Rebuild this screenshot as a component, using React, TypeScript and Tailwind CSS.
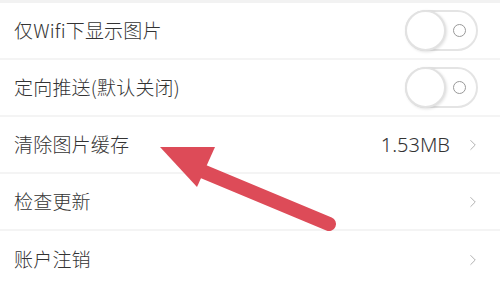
import { ChevronRight } from "lucide-react";

const font = { fontFamily: '"Noto Sans CJK SC", "Noto Sans", sans-serif' };

function Toggle() {
  return (
    <div className="relative w-[73px] h-[41px] rounded-full border-2 border-[#e4e4e4] bg-white">
      <div className="absolute left-[-2px] top-[-2px] w-[41px] h-[41px] rounded-full border-2 border-[#e2e2e2] bg-white shadow-[1px_1px_3px_rgba(0,0,0,0.12)]" />
      <div className="absolute right-[10px] top-[12px] w-[13px] h-[13px] rounded-full border-[1.5px] border-[#999]" />
    </div>
  );
}

function Row({ label, right, last }: { label: string; right: React.ReactNode; last?: boolean }) {
  return (
    <div className={`h-[57px] flex items-center justify-between pl-[14px] pr-[18px] bg-white ${last ? "" : "border-b-2 border-[#f4f4f4]"}`}>
      <span className="text-[19px] font-light text-[#333] tracking-[0.2px]">{label}</span>
      {right}
    </div>
  );
}

function Chevron() {
  return <ChevronRight className="w-[18px] h-[18px] text-[#b0b0b0]" strokeWidth={1.3} />;
}

export default function App() {
  return (
    <div className="relative w-[500px] h-[284px] overflow-hidden bg-white" style={font}>
      <div className="h-[3px] bg-[#f2f2f2]" />
      <Row label="仅Wifi下显示图片" right={<div className="mr-[4px]"><Toggle /></div>} />
      <Row label="定向推送(默认关闭)" right={<div className="mr-[4px]"><Toggle /></div>} />
      <Row
        label="清除图片缓存"
        right={
          <div className="flex items-center gap-[14px]">
            <span className="text-[20px] font-light text-[#333]" style={{ fontFamily: '"Noto Sans", sans-serif' }}>1.53MB</span>
            <Chevron />
          </div>
        }
      />
      <Row label="检查更新" right={<Chevron />} />
      <Row label="账户注销" right={<Chevron />} last />

      {/* red arrow annotation */}
      <svg className="absolute left-0 top-0" width="500" height="284" viewBox="0 0 500 284">
        <line x1="190" y1="166" x2="329" y2="224" stroke="#dd4b58" strokeWidth="14" strokeLinecap="round" />
        <polygon points="160,147 215,147 197,187" fill="#dd4b58" />
      </svg>
    </div>
  );
}
